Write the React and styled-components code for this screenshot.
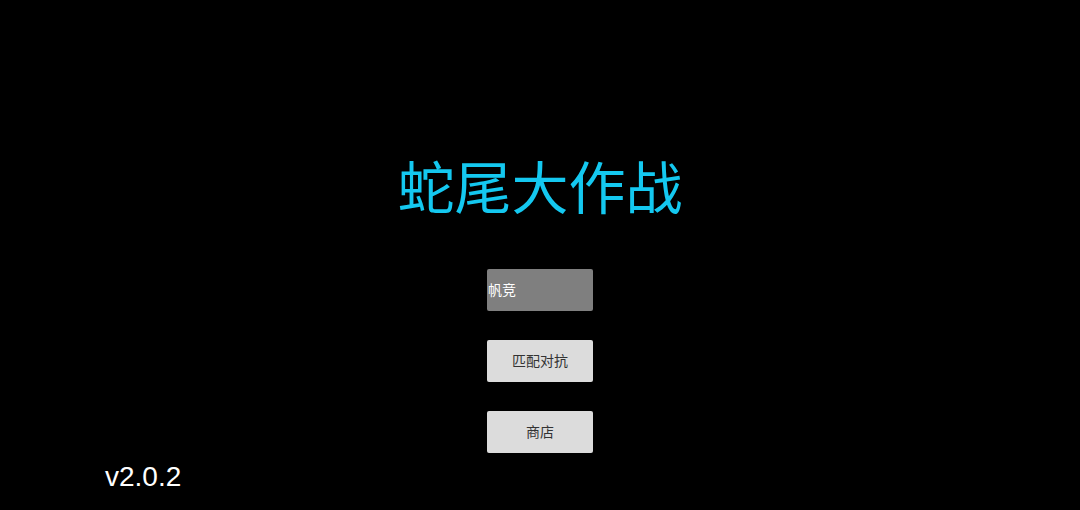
import React from "react"
import styled, { createGlobalStyle } from "styled-components"

const GlobalStyle = createGlobalStyle`
  html, body {
    margin: 0;
    padding: 0;
    background: #000;
  }
  body {
    font-family: "Noto Sans CJK SC", "Liberation Sans", sans-serif;
  }
`

const Screen = styled.div`
  width: 1080px;
  height: 510px;
  background: #000;
  display: flex;
  flex-direction: column;
  align-items: center;
  overflow: hidden;
`

const Title = styled.h1`
  margin: 149px 0 0;
  font-size: 57px;
  line-height: 70px;
  font-weight: 400;
  color: #14c8f0;
  letter-spacing: 0;
`

const Menu = styled.div`
  margin-top: 50px;
  display: flex;
  flex-direction: column;
  gap: 29px;
`

const MenuButton = styled.button`
  width: 106px;
  height: 42px;
  border: none;
  border-radius: 2px;
  padding: 0 0 2px;
  font-family: "Noto Sans CJK SC", sans-serif;
  font-size: 14px;
  display: flex;
  align-items: center;
  justify-content: ${({ $left }) => ($left ? "flex-start" : "center")};
  background: ${({ $dim }) => ($dim ? "#7f7f7f" : "#dcdcdc")};
  color: ${({ $dim }) => ($dim ? "#fff" : "#333")};
  padding-left: ${({ $left }) => ($left ? "1px" : "0")};
`

const Footer = styled.div`
  align-self: stretch;
  padding-left: 105px;
  margin-top: 4px;
`

const Version = styled.span`
  font-family: "Liberation Sans", Arial, sans-serif;
  font-size: 28px;
  line-height: 40px;
  color: #fff;
`

export default function App() {
  return (
    <>
      <GlobalStyle />
      <Screen>
        <Title>蛇尾大作战</Title>
        <Menu>
          <MenuButton $dim $left>帆竞</MenuButton>
          <MenuButton>匹配对抗</MenuButton>
          <MenuButton>商店</MenuButton>
        </Menu>
        <Footer>
          <Version>v2.0.2</Version>
        </Footer>
      </Screen>
    </>
  )
}
